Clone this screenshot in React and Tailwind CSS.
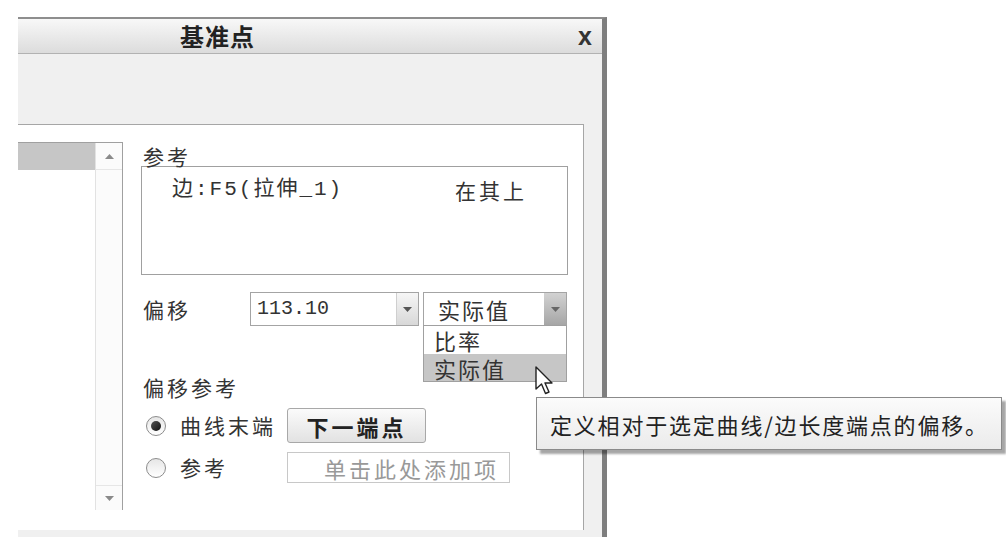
import React from 'react';

// 小三角箭头
const Tri = ({ up = false, color = '#555' }) => (
  <svg width="9" height="5" viewBox="0 0 9 5">
    {up ? <path d="M0 5 L4.5 0 L9 5 Z" fill={color} /> : <path d="M0 0 L9 0 L4.5 5 Z" fill={color} />}
  </svg>
);

const Radio = ({ checked }) => (
  <div className="w-[20px] h-[20px] rounded-full border border-[#8c8c8c] bg-gradient-to-b from-[#e6e6e6] to-white flex items-center justify-center">
    {checked && <div className="w-[10px] h-[10px] rounded-full bg-gradient-to-br from-[#555] to-[#111]" />}
  </div>
);

const App = () => {
  return (
    <div className="relative w-[1006px] h-[548px] bg-white overflow-hidden font-['Noto_Sans_CJK_SC',sans-serif] text-[#333]">
      {/* 对话框 */}
      <div className="ml-[18px] pt-[17px] w-[589px]">
        <div className="bg-[#f0f0f0] border-t-2 border-t-[#8e8e8e] border-r-[5px] border-r-[#7e7e7e]">
          {/* 标题栏 */}
          <div className="h-[35px] flex items-center bg-gradient-to-b from-[#f8f8f8] to-[#dcdcdc] border-b border-[#b2b2b2]">
            <span className="pl-[162px] text-[24px] font-bold tracking-[1px] leading-none text-[#222]">基准点</span>
            <span className="ml-auto pr-[10px] font-['Liberation_Sans',sans-serif] text-[25px] font-bold leading-none text-[#333]">x</span>
          </div>
          <div className="h-[70px]" />

          {/* 主面板 */}
          <div className="pb-[7px]">
            <div className="w-[566px] h-[406px] bg-white border-t border-r border-[#a6a6a6] flex items-start">
              {/* 左侧列表 */}
              <div className="mt-[17px] w-[105px] h-[368px] border-t border-r border-[#a0a0a0] flex">
                <div className="w-[77px]">
                  <div className="h-[27px] bg-[#c6c6c6]" />
                </div>
                <div className="w-[27px] flex flex-col justify-between border-l border-[#e2e2e2] bg-[#fbfbfb]">
                  <div className="h-[27px] flex items-center justify-center border-b border-[#e6e6e6]">
                    <Tri up color="#8a8a8a" />
                  </div>
                  <div className="h-[25px] flex items-center justify-center border-t border-[#e6e6e6]">
                    <Tri color="#8a8a8a" />
                  </div>
                </div>
              </div>

              {/* 右侧内容 */}
              <div className="ml-[18px] w-[427px] pt-[21px] text-[21px] tracking-[3px]">
                <div className="pl-[2px] leading-[20px]">参考</div>
                <div className="h-[109px] border border-[#a0a0a0] flex justify-between pl-[30px] pr-[40px] pt-[11px]">
                  <span className="font-['Liberation_Mono','Noto_Sans_CJK_SC',monospace] tracking-[2px] leading-[24px]">边:F5(拉伸_1)</span>
                  <span className="leading-[24px]">在其上</span>
                </div>

                {/* 偏移 */}
                <div className="mt-[17px] flex items-center h-[34px]">
                  <div className="w-[109px] pl-[2px] leading-[22px]">偏移</div>
                  <div className="w-[169px] h-[34px] border border-[#a4a4a4] flex">
                    <div className="flex-1 pl-[6px] flex items-center font-['Liberation_Mono',monospace] text-[20px] tracking-normal leading-none">113.10</div>
                    <div className="w-[22px] border-l border-[#cfcfcf] bg-gradient-to-b from-[#f6f6f6] to-[#d8d8d8] flex items-center justify-center">
                      <Tri color="#555" />
                    </div>
                  </div>
                  <div className="relative ml-[4px] w-[144px] h-[34px] border border-[#a4a4a4] flex">
                    <div className="flex-1 pl-[14px] flex items-center tracking-[2px] text-[22px] leading-none">实际值</div>
                    <div className="w-[22px] bg-gradient-to-b from-[#d2d2d2] to-[#a6a6a6] flex items-center justify-center">
                      <Tri color="#666" />
                    </div>
                    {/* 下拉列表 */}
                    <div className="absolute left-[-1px] top-[32px] w-[144px] border border-[#a0a0a0] bg-white text-[22px] tracking-[2px] leading-none">
                      <div className="h-[28px] pl-[10px] flex items-center">比率</div>
                      <div className="h-[27px] pl-[10px] flex items-center bg-[#c6c6c6]">实际值</div>
                    </div>
                  </div>
                </div>

                {/* 偏移参考 */}
                <div className="mt-[50px] pl-[2px] leading-[22px]">偏移参考</div>
                <div className="mt-[10px] h-[35px] flex items-center">
                  <div className="w-[146px] flex items-center">
                    <div className="ml-[5px]"><Radio checked /></div>
                    <span className="ml-[14px] leading-none">曲线末端</span>
                  </div>
                  <button className="w-[139px] h-[35px] rounded-[3px] border border-[#a8a8a8] bg-gradient-to-b from-[#fbfbfb] to-[#e2e2e2] text-[22px] font-bold tracking-[3px] text-[#222] leading-none">
                    下一端点
                  </button>
                </div>
                <div className="mt-[9px] h-[31px] flex items-center">
                  <div className="w-[146px] flex items-center">
                    <div className="ml-[5px]"><Radio /></div>
                    <span className="ml-[14px] leading-none">参考</span>
                  </div>
                  <div className="w-[223px] h-[31px] border border-[#c8c8c8] flex items-center justify-end pr-[10px] text-[22px] tracking-[3px] text-[#999] leading-none">
                    单击此处添加项
                  </div>
                </div>
              </div>
            </div>
          </div>
        </div>
      </div>

      {/* 鼠标指针 */}
      <svg className="absolute left-[535px] top-[366px]" width="19" height="29" viewBox="0 0 19 29">
        <path d="M1 1 L1 23 L6.5 18 L10.5 27.5 L14 26 L10 17 L17 17 Z" fill="white" stroke="#222" strokeWidth="1.4" strokeLinejoin="round" />
      </svg>

      {/* 提示框 */}
      <div className="absolute left-[536px] top-[397px] w-[466px] h-[53px] border border-[#8a8a8a] bg-gradient-to-b from-[#fbfbfb] to-[#ebebeb] shadow-[4px_4px_2px_rgba(0,0,0,0.35)] flex items-center pl-[13px] text-[22px] tracking-[1.8px] text-[#222] leading-none">
        定义相对于选定曲线/边长度端点的偏移。
      </div>
    </div>
  );
};

export default App;
